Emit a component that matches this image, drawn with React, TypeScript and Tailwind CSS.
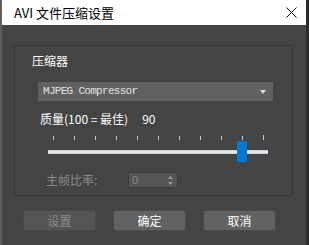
const cjk = { fontFamily: '"Noto Sans CJK SC", "Noto Sans", sans-serif' };

const ticks = [0, 1, 2, 3, 4, 5, 6, 7, 8, 9, 10];

const QualitySlider = ({ value }: { value: number }) => {
    const thumbLeft = 5 + (value / 100) * 210 - 5;
    return (
        <div className="flex flex-col">
            <div className="flex flex-row items-end h-[5px] pl-[5px] gap-[20px]">
                {ticks.map((t) => (
                    <div key={t} className={`w-px bg-[#c8c8c8] ${t === 10 ? "h-[5px]" : "h-[4px]"}`} />
                ))}
            </div>
            <div className="relative w-[220px] h-[21px] mt-[1px]">
                <div className="absolute left-0 right-0 top-[9px] h-[4px] bg-[#e8e8e8] border-y border-[#d0d0d0]" />
                <div className="absolute top-0 w-[10px] h-[21px] bg-[#0078d7]" style={{ left: thumbLeft }} />
            </div>
        </div>
    );
};

export default function App() {
    return (
        <div className="w-[309px] h-[245px] flex flex-row overflow-hidden bg-[#2b2b2b]" style={cjk}>
            <div className="w-[2px] h-full bg-[#5e5e5e]" />
            <div className="w-[304px] h-full flex flex-col">
                <div className="h-[25px] bg-white flex flex-row items-center justify-between pl-[12px] pr-[9px]">
                    <span className="text-[13px] leading-none text-black">AVI 文件压缩设置</span>
                    <svg width="11" height="11" viewBox="0 0 11 11">
                        <path d="M0.5 0.5 L10.5 10.5 M10.5 0.5 L0.5 10.5" stroke="#111" strokeWidth="1" />
                    </svg>
                </div>
                <div className="flex-1 bg-[#444444] flex flex-col pt-[20px] px-[12px]">
                    <div className="w-[279px] h-[151px] border border-[#363636] rounded-[2px] flex flex-col pl-[17px]">
                        <div className="text-[12px] leading-[14px] text-white mt-[8px]">压缩器</div>
                        <div className="ml-[6px] mt-[14px] w-[235px] h-[19px] bg-[#616161] flex flex-row items-center justify-between pl-[5px] pr-[7px]">
                            <span className="text-[11px] tracking-[-0.7px] text-[#e0e0e0]" style={{ fontFamily: '"Liberation Mono", monospace' }}>
                                MJPEG Compressor
                            </span>
                            <svg width="6" height="4" viewBox="0 0 6 4">
                                <path d="M0 0 H6 L3 4 Z" fill="#dcdcdc" />
                            </svg>
                        </div>
                        <div className="ml-[8px] mt-[11px] flex flex-row items-center gap-[14px] text-[12px] leading-[14px] text-white">
                            <span>质量(100 = 最佳)</span>
                            <span>90</span>
                        </div>
                        <div className="ml-[16px] mt-[9px]">
                            <QualitySlider value={90} />
                        </div>
                        <div className="ml-[14px] mt-[10px] flex flex-row items-center gap-[12px]">
                            <span className="text-[12px] leading-[14px] text-[#8a8a8a] w-[70px]">主帧比率:</span>
                            <div className="w-[50px] h-[16px] bg-[#555555] border border-[#3c3c3c] flex flex-row items-center justify-between pl-[3px] pr-[4px]">
                                <span className="text-[11px] text-[#8a8a8a]" style={{ fontFamily: '"Liberation Sans", sans-serif' }}>0</span>
                                <svg width="5" height="9" viewBox="0 0 5 9">
                                    <path d="M2.5 0 L5 3 H0 Z M2.5 9 L5 6 H0 Z" fill="#9a9a9a" />
                                </svg>
                            </div>
                        </div>
                    </div>
                    <div className="flex flex-row gap-[17px] mt-[14px] pl-[9px]">
                        <button className="w-[73px] h-[21px] rounded-[3px] bg-[#555555] border border-[#4a4a4a] text-[12px] text-[#8a8a8a]">设置</button>
                        <button className="w-[73px] h-[21px] rounded-[3px] bg-[#626262] border border-[#4a4a4a] text-[12px] text-white">确定</button>
                        <button className="w-[73px] h-[21px] rounded-[3px] bg-[#626262] border border-[#4a4a4a] text-[12px] text-white">取消</button>
                    </div>
                </div>
            </div>
            <div className="w-[3px] h-full bg-[#2b2b2b]" />
        </div>
    );
}
